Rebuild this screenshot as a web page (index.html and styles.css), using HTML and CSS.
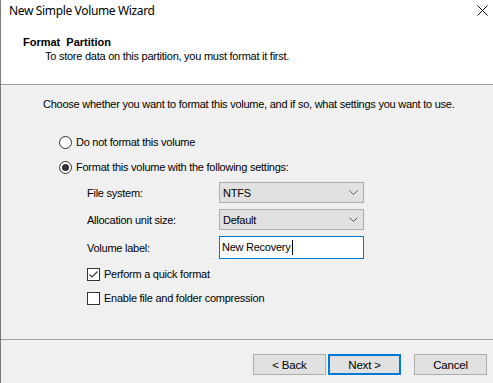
FILE: index.html
```html
<!DOCTYPE html>
<html lang="en">

<head>
    <meta charset="UTF-8">
    <title>New Simple Volume Wizard</title>
    <link rel="stylesheet" href="styles.css">
</head>

<body>
    <div class="window">
        <div class="titlebar">
            <span class="title">New Simple Volume Wizard</span>
            <svg class="close" width="11" height="11" viewBox="0 0 11 11">
                <path d="M0.5 0.5 L10.5 10.5 M10.5 0.5 L0.5 10.5" stroke="#000" stroke-width="1" fill="none" />
            </svg>
        </div>

        <div class="header">
            <div class="header-title">Format Partition</div>
            <div class="header-sub">To store data on this partition, you must format it first.</div>
        </div>

        <div class="content">
            <p class="intro">Choose whether you want to format this volume, and if so, what settings you want to use.</p>

            <div class="option option-first"><span class="radio"></span>Do not format this volume</div>
            <div class="option"><span class="radio checked"></span>Format this volume with the following settings:</div>

            <div class="settings">
                <span class="label">File system:</span>
                <div class="select">NTFS
                    <svg class="chevron" width="9" height="5" viewBox="0 0 9 5">
                        <path d="M0.5 0.5 L4.5 4.5 L8.5 0.5" stroke="#5a5a5a" fill="none" />
                    </svg>
                </div>
                <span class="label">Allocation unit size:</span>
                <div class="select">Default
                    <svg class="chevron" width="9" height="5" viewBox="0 0 9 5">
                        <path d="M0.5 0.5 L4.5 4.5 L8.5 0.5" stroke="#5a5a5a" fill="none" />
                    </svg>
                </div>
                <span class="label">Volume label:</span>
                <div class="textbox"><span class="caret">New Recovery</span></div>
            </div>

            <div class="check-row check-first">
                <span class="checkbox">
                    <svg width="11" height="11" viewBox="0 0 11 11">
                        <path d="M1.5 5.5 L4 8 L9.5 2.5" stroke="#333" stroke-width="1.1" fill="none" />
                    </svg>
                </span>Perform a quick format
            </div>
            <div class="check-row"><span class="checkbox"></span>Enable file and folder compression</div>
        </div>

        <div class="footer">
            <button class="btn">&lt; Back</button>
            <button class="btn btn-default">Next &gt;</button>
            <button class="btn btn-cancel">Cancel</button>
        </div>
    </div>
</body>

</html>
```

FILE: styles.css
```css
* {
    padding: 0;
    margin: 0;
    box-sizing: border-box;
}

body {
    width: 493px;
    height: 383px;
    overflow: hidden;
    font-family: "Liberation Sans", Arial, sans-serif;
    font-size: 11px;
    letter-spacing: -0.25px;
    color: #000;
}

.window {
    display: flex;
    flex-direction: column;
    width: 493px;
    height: 383px;
    border-left: 1px solid #7a7a7a;
    background: #f0f0f0;
}

.titlebar {
    display: flex;
    align-items: center;
    height: 30px;
    padding: 0 5px 10px 8px;
    background: #fff;
}

.title {
    font-family: "Noto Sans", sans-serif;
    font-size: 12px;
    letter-spacing: -0.35px;
}

.close {
    margin-left: auto;
}

/* white band with the page title */
.header {
    height: 55px;
    padding: 6px 0 0 22px;
    background: #fff;
    border-bottom: 1px solid #a0a0a0;
}

.header-title {
    font-weight: bold;
    line-height: 13px;
    letter-spacing: 0;
    word-spacing: 3px;
}

.header-sub {
    margin-top: 1px;
    padding-left: 22px;
    line-height: 13px;
}

.content {
    height: 255px;
    padding: 13px 0 0 42px;
    border-bottom: 1px solid #a0a0a0;
}

.intro {
    line-height: 13px;
}

.option {
    display: flex;
    align-items: center;
    height: 20px;
    margin: 5px 0 0 16px;
}

.option-first {
    margin-top: 21px;
}

.radio {
    position: relative;
    width: 13px;
    height: 13px;
    margin-right: 4px;
    border: 1px solid #333;
    border-radius: 50%;
    background: #fff;
}

.radio.checked::after {
    content: "";
    position: absolute;
    top: 2px;
    left: 2px;
    width: 7px;
    height: 7px;
    border-radius: 50%;
    background: #333;
}

.settings {
    display: grid;
    grid-template-columns: 132px 145px;
    grid-template-rows: 21px 21px 23px;
    row-gap: 6px;
    align-items: center;
    margin: 5px 0 0 44px;
}

.select {
    display: flex;
    align-items: center;
    height: 21px;
    padding: 0 5px 0 3px;
    border: 1px solid #adadad;
    background: #e1e1e1;
}

.chevron {
    margin-left: auto;
}

.textbox {
    display: flex;
    align-items: center;
    height: 23px;
    padding-left: 2px;
    border: 1px solid #0078d7;
    background: #fff;
}

.caret {
    padding-right: 1px;
    border-right: 1px solid #000;
    line-height: 15px;
}

.check-row {
    display: flex;
    align-items: center;
    height: 20px;
    margin: 4px 0 0 44px;
}

.check-first {
    margin-top: 5px;
}

.checkbox {
    display: flex;
    align-items: center;
    justify-content: center;
    width: 13px;
    height: 13px;
    margin-right: 4px;
    border: 1px solid #333;
    background: #fff;
}

.footer {
    display: flex;
    align-items: flex-start;
    justify-content: flex-end;
    flex: 1;
    padding: 14px 6px 0 0;
}

.btn {
    width: 73px;
    height: 21px;
    border: 1px solid #adadad;
    background: #e1e1e1;
    font-family: inherit;
    font-size: 11.5px;
    letter-spacing: -0.2px;
    color: #000;
}

.btn-default {
    margin-left: 2px;
    border: 2px solid #0078d7;
}

.btn-cancel {
    margin-left: 13px;
}
```
